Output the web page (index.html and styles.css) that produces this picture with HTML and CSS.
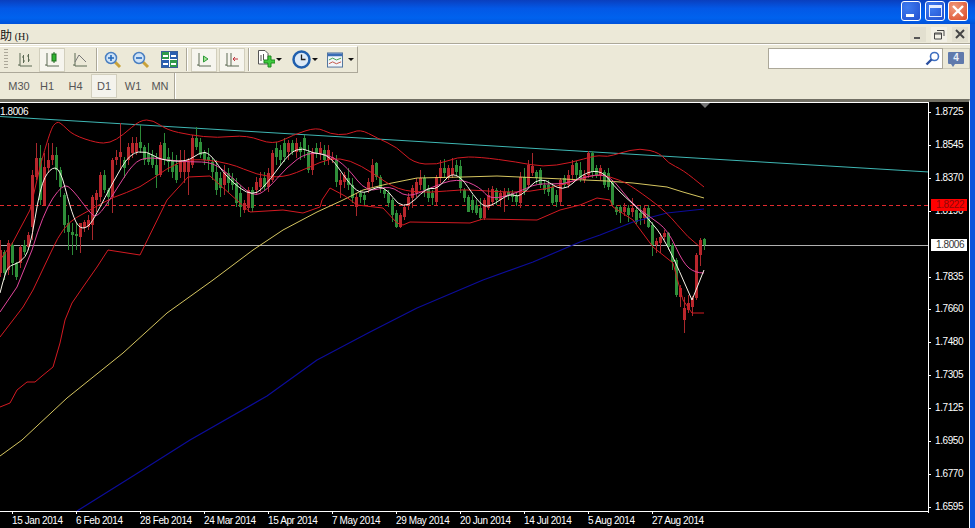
FILE: index.html
```html
<!DOCTYPE html>
<html lang="zh">
<head>
<meta charset="utf-8">
<title>Chart</title>
<link rel="stylesheet" href="styles.css">
</head>
<body>
<div class="window">
  <header class="titlebar">
    <button class="cap cap-min" aria-label="min"><span class="cap-min-bar"></span></button>
    <button class="cap cap-max" aria-label="max"><span class="cap-max-box"></span></button>
    <button class="cap cap-close" aria-label="close">
      <svg width="14" height="14" viewBox="0 0 14 14"><path d="M2 2L12 12M12 2L2 12" stroke="#fff" stroke-width="2.4" fill="none"/></svg>
    </button>
  </header>
  <div class="content">
    <nav class="menubar">
      <span class="menu-item">助 <small>(H)</small></span>
      <div class="mdi">
        <svg class="mdi-btn" width="16" height="15" viewBox="0 0 16 15"><path d="M4 11H10" stroke="#555" stroke-width="2"/></svg>
        <svg class="mdi-btn mdi-hi" width="16" height="15" viewBox="0 0 16 15"><path d="M6 3.500H13V9M3.500 6H10.500V12H3.500Z M3.500 7H10" stroke="#444" fill="none"/></svg>
        <svg class="mdi-btn" width="16" height="15" viewBox="0 0 16 15"><path d="M4 3L12 11M12 3L4 11" stroke="#444" stroke-width="2" fill="none"/></svg>
      </div>
    </nav>
    <div class="toolrow">
      <div class="toolbar">
        <span class="grip"></span>
        <span class="tb tb-first"><svg width="16" height="16" viewBox="0 0 16 16"><path d="M3 1V14H15M1 13H3M6.500 3V11M6.500 5H5M6.500 9H8M11.500 2V10M11.500 4H10M11.500 8H13" stroke="#5d6b55" fill="none"/></svg></span>
        <span class="tb tb-on tb-a"><svg width="16" height="16" viewBox="0 0 16 16"><path d="M3 1V14H15M1 13H3" stroke="#5d6b55" fill="none"/><path d="M10 0V11" stroke="#1c6a1c"/><rect x="8" y="2" width="4" height="7" fill="#2fb52f" stroke="#1c6a1c"/></svg></span>
        <span class="tb tb-line"><svg width="16" height="16" viewBox="0 0 16 16"><path d="M3 1V14H15M1 13H3" stroke="#5d6b55" fill="none"/><path d="M3 10L7 3L14 10" stroke="#777" fill="none"/></svg></span>
        <span class="sep sep-a"></span>
        <span class="tb tb-zoom"><svg width="18" height="18" viewBox="0 0 18 18"><path d="M11 11L16 16" stroke="#c9a23a" stroke-width="3"/><circle cx="7" cy="7" r="5.500" fill="#cfe3f7" stroke="#4a7fc0" stroke-width="1.500"/><path d="M4 7H10M7 4V10" stroke="#2468b8" stroke-width="1.600"/></svg></span>
        <span class="tb tb-zoom"><svg width="18" height="18" viewBox="0 0 18 18"><path d="M11 11L16 16" stroke="#c9a23a" stroke-width="3"/><circle cx="7" cy="7" r="5.500" fill="#cfe3f7" stroke="#4a7fc0" stroke-width="1.500"/><path d="M4 7H10" stroke="#2468b8" stroke-width="1.600"/></svg></span>
        <span class="tb tb-zoom"><svg width="17" height="17" viewBox="0 0 17 17"><rect x=".5" y=".5" width="16" height="16" fill="#fff" stroke="#3a5f9a"/><rect x="1" y="1" width="7" height="7" fill="#2f9a4a"/><rect x="9" y="1" width="7" height="7" fill="#2a5fb0"/><rect x="1" y="9" width="7" height="7" fill="#2a5fb0"/><rect x="9" y="9" width="7" height="7" fill="#2f9a4a"/><path d="M2 5H7M10 5H15M2 13H7M10 13H15" stroke="#fff" stroke-width="2"/></svg></span>
        <span class="sep sep-b"></span>
        <span class="tb tb-on tb-b"><svg width="16" height="16" viewBox="0 0 16 16"><path d="M3 1V14H15M1 13H3" stroke="#5d6b55" fill="none"/><path d="M7.500 4V10L12 7Z" fill="#9fe08f" stroke="#2f9a3a"/></svg></span>
        <span class="tb tb-on tb-c"><svg width="16" height="16" viewBox="0 0 16 16"><path d="M3 1V14H15M1 13H3M7 1V14" stroke="#5d6b55" fill="none"/><path d="M9 7H14M11 5L9 7L11 9" stroke="#c0303a" fill="none"/></svg></span>
        <span class="sep sep-c"></span>
        <span class="tb tb-drop"><svg width="18" height="19" viewBox="0 0 18 19"><path d="M1.500 .5H8L11 3.500V14H1.500Z" fill="#fff" stroke="#555"/><path d="M4 5V11M6.500 4V10" stroke="#555"/><path d="M11 6V10H7V13H11V17H14V13H18V10H14V6Z" fill="#3ecb3e" stroke="#1f8a1f"/></svg><i class="caret"></i></span>
        <span class="tb tb-drop"><svg width="19" height="19" viewBox="0 0 19 19"><circle cx="9.500" cy="9.500" r="8" fill="#dbe9f7" stroke="#1f5fae" stroke-width="2.500"/><path d="M9.500 4.500V9.500H13.500" stroke="#222" stroke-width="1.300" fill="none"/></svg><i class="caret"></i></span>
        <span class="tb tb-drop tb-ind"><svg width="17" height="16" viewBox="0 0 17 16"><rect x=".5" y=".5" width="16" height="15" fill="#f1f5f9" stroke="#4a6f9a"/><rect x="1" y="1" width="15" height="3" fill="#3a6cb5"/><path d="M2 8L6 6L10 8L15 6" stroke="#3aa04a" fill="none"/><path d="M2 12L6 10L10 12L15 10" stroke="#c05040" fill="none"/></svg><i class="caret"></i></span>
      </div>
      <div class="searchwrap">
        <div class="search">
          <svg width="15" height="15" viewBox="0 0 15 15"><circle cx="9.500" cy="5.500" r="4" fill="#fff" stroke="#3f6fc0" stroke-width="1.600"/><path d="M6.500 8.500L1.500 13.500" stroke="#2a4f9f" stroke-width="2.400"/></svg>
        </div>
        <div class="bubble-btn"><span class="bubble">4</span></div>
      </div>
    </div>
    <div class="tfrow">
      <div class="tfs">
        <span class="tf tf-m30">M30</span>
        <span class="tf tf-h1">H1</span>
        <span class="tf tf-h4">H4</span>
        <span class="tf tf-d1">D1</span>
        <span class="tf tf-w1">W1</span>
        <span class="tf tf-mn">MN</span>
      </div>
    </div>
    <main class="chart">
      <div class="chart-main">
        <div class="plot">
          <span class="cur-left">1.8006</span>
          <span class="marker"></span>
          <svg class="plot-svg" width="929" height="408" viewBox="0 103 929 408">
            <path d="M0 116.500L929 172" class="l-cyan"/>
            <path d="M0 245.500H929" class="l-grey"/>
            <path d="M0 205.500H929" class="l-dash"/>
            <g class="candles" transform="translate(.5 0)">
              <path class="wick-r" d="M0 240V277M8 240V275M20 245V268M28 232V250M32 170V240M36 143V180M44 153V205M48 143V173M52 143V165M80 223V253M84 220V232M88 215V230M92 195V240M96 190V212M100 172V202M112 158V213M116 150V165M120 123V170M128 143V165M132 137V158M136 137V155M160 142V177M180 150V178M184 150V183M188 158V195M192 135V168M224 165V195M244 200V213M248 187V212M256 177V195M260 172V192M268 168V192M272 150V182M288 140V160M296 138V158M312 148V175M320 142V160M328 145V165M332 152V163M340 173V198M344 172V188M356 193V216M368 178V193M372 159V187M400 213V228M404 204V220M408 193V210M412 185V208M416 178V197M420 170V190M436 175V205M440 160V183M448 165V180M452 158V178M484 198V220M488 188V210M492 186V206M500 190V207M504 188V212M520 172V208M528 160V188M532 153V176M560 178V205M568 170V188M572 160V180M584 170V183M588 151V178M600 165V180M624 203V216M632 198V217M644 205V224M656 238V253M660 233V253M664 230V240M680 285V307M684 297V333M688 295V313M692 296V316M696 253V300M700 238V266"/>
              <path class="wick-g" d="M4 250V280M12 242V275M16 262V280M24 240V255M40 145V205M56 147V180M60 167V197M64 193V233M68 215V250M72 223V255M76 223V250M104 170V193M108 188V205M124 157V178M140 125V153M144 145V165M148 143V165M152 150V168M156 153V188M164 133V165M168 148V172M172 152V178M176 155V183M196 127V150M200 138V158M204 150V165M208 148V170M212 158V180M216 160V195M220 172V197M228 168V192M232 173V190M236 178V207M240 185V217M252 187V212M264 172V190M276 142V165M280 145V165M284 138V162M292 140V155M300 142V160M304 135V158M308 145V173M316 143V158M324 145V165M336 155V187M348 168V190M352 178V203M360 190V203M364 192V205M376 162V180M380 175V193M384 187V198M388 190V207M392 198V222M396 210V228M424 175V197M428 185V202M432 190V205M444 159V178M456 160V176M460 160V193M464 188V202M468 195V212M472 195V213M476 200V215M480 198V220M496 188V205M508 188V200M512 190V202M516 192V206M524 168V195M536 170V184M540 168V188M544 180V194M548 180V196M552 183V205M556 190V207M564 175V188M576 161V180M580 162V182M592 151V178M596 165V178M604 170V188M608 168V190M612 180V207M616 205V215M620 205V223M628 205V222M636 207V224M640 206V225M648 205V228M652 222V256M668 232V250M672 243V270M676 258V297M704 238V250"/>
              <path class="body-r" d="M0 250V273M8 243V270M20 247V263M28 235V247M32 175V227M36 158V177M44 167V205M48 160V168M52 155V160M80 223V237M84 222V228M88 220V227M92 197V225M96 193V200M100 175V197M112 160V197M116 157V160M120 152V157M128 147V160M132 143V153M136 143V152M160 145V175M180 160V172M184 162V172M188 162V172M192 138V165M224 172V185M244 203V210M248 190V208M256 182V190M260 178V187M268 173V187M272 153V180M288 143V152M296 143V152M312 152V170M320 148V153M328 150V160M332 157V160M340 180V185M344 175V182M356 197V207M368 182V190M372 165V182M400 215V227M404 207V217M408 197V205M412 188V198M416 182V193M420 178V185M436 177V202M440 168V178M448 168V177M452 168V175M484 200V218M488 195V208M492 189V202M500 193V200M504 192V197M520 177V203M528 165V185M532 166V173M560 180V202M568 175V185M572 165V175M584 175V180M588 153V175M600 168V175M624 207V212M632 208V212M644 208V218M656 241V245M660 237V243M664 233V237M680 288V297M684 308V320M688 303V310M692 298V307M696 255V298M700 240V255"/>
              <path class="body-g" d="M4 252V273M12 245V263M16 263V277M24 245V252M40 158V200M56 155V170M60 170V187M64 195V225M68 223V232M72 232V235M76 234V236M104 175V190M108 190V197M124 160V168M140 142V148M144 147V160M148 153V162M152 155V165M156 165V175M164 143V160M168 157V162M172 160V172M176 165V180M196 138V147M200 142V155M204 152V160M208 157V160M212 162V172M216 172V190M220 178V188M228 173V183M232 178V185M236 183V203M240 193V207M252 190V208M264 178V187M276 148V157M280 150V160M284 143V157M292 143V152M300 147V152M304 138V150M308 152V170M316 148V153M324 150V160M336 160V182M348 178V185M352 185V198M360 193V197M364 195V200M376 163V177M380 177V188M384 190V194M388 193V203M392 200V215M396 213V227M424 178V190M428 188V198M432 193V198M444 168V173M456 165V172M460 166V188M464 190V198M468 197V212M472 200V210M476 205V213M480 208V218M496 190V200M508 192V195M512 193V197M516 195V202M524 177V192M536 172V178M540 170V185M544 185V190M548 185V192M552 187V203M556 195V202M564 178V185M576 163V175M580 170V178M592 153V172M596 168V175M604 172V185M608 173V187M612 182V205M616 207V212M620 207V213M628 208V215M636 210V222M640 213V218M648 208V227M652 225V245M668 233V247M672 245V262M676 260V295M704 239V245"/>
            </g>
            <polyline class="l-blue" points="77,511 133,476 190,440 267,396 317,360 370,332 417,308 483,280 533,262 580,242 600,235 633,222 667,213 704,209"/>
            <polyline class="l-yellow" points="0,456 22,440 67,398 123,353 167,313 213,280 253,250 283,230 317,212 343,200 363,190 387,184 417,178 463,177 497,176 563,179 607,181 633,183 667,187 683,192 704,198"/>
            <path class="l-red" d="M0 260L13 242L30 210L40 167Q50 130 53.500 125.500Q57 121 60 123Q63 125 68 130Q73 135 85 139Q97 143 103.500 143Q110 143 116.500 139Q123 135 131.500 127.500Q140 120 146.500 120Q153 120 160 125Q167 130 178.500 132.500Q190 135 203.500 136.500Q217 138 232 136.500Q247 135 260 140Q273 145 283 140Q293 135 305 131Q317 127 323.500 130.500Q330 134 338.500 134.500Q347 135 353.500 132Q360 129 368.500 133.500Q377 138 387 142.500Q397 147 405 155Q413 163 425 164Q437 165 447 161Q457 157 468.500 157Q480 157 498.500 159.500Q517 162 530 164.500Q543 167 556.500 165Q570 163 583.500 159Q597 155 602 156Q607 157 613.500 155Q620 153 630 150.500Q640 148 650 150.500Q660 153 664 158Q668 163 675.500 166.500Q683 170 693.500 178.500L704 187"/>
            <path class="l-red" d="M0 337L23 307L33 290L52 250Q63 225 76.500 217.500Q90 210 101.500 203.500Q113 197 126.500 192.500Q140 188 153.500 178Q167 168 178.500 163Q190 158 210 160.500Q230 163 243.500 169Q257 175 270 176.500Q283 178 296.500 172.500Q310 167 320 162.500Q330 158 340 159Q350 160 361.500 166.500Q373 173 385 181.500Q397 190 413.500 191.500Q430 193 446.500 191Q463 189 480 190.500Q497 192 513.500 192Q530 192 546.500 188.500Q563 185 580 179Q597 173 608.500 176.500Q620 180 626.500 183.500Q633 187 650 199.500Q667 212 677 224.500Q687 237 700 247"/>
            <polyline class="l-red" points="0,407 10,403 17,390 27,382 35,382 42,376 53,367 60,343 65,320 72,303 83,287 97,267 108,250 140,255 167,200 188,177 210,176 250,212 283,210 303,213 320,207 322,200 330,188 345,196 357,205 383,208 397,223 403,225 410,222 470,223 483,219 537,220 560,210 580,205 597,198 610,200 613,207 633,220 653,247 673,263 683,300 692,313 704,313"/>
            <path class="l-pink" d="M0 312L17 287L32 250Q43 213 53 198Q63 183 68 186.500Q73 190 81.500 201.500Q90 213 93.500 215.500Q97 218 105 206.500Q113 195 123 179Q133 163 140 160Q147 157 157 158.500Q167 160 178.500 161Q190 162 201.500 162Q213 162 223 170Q233 178 243 187.500Q253 197 260 193.500Q267 190 277 178.500Q287 167 297 159.500Q307 152 318.500 153.500Q330 155 338.500 161Q347 167 357 180Q367 193 378.500 189Q390 185 398.500 191.500Q407 198 418.500 193Q430 188 443.500 183Q457 178 468.500 182.500Q480 187 485 193.500Q490 200 503.500 196.500Q517 193 527 188Q537 183 550 184Q563 185 576.500 180Q590 175 600 175Q610 175 620 188.500Q630 202 640 209.500Q650 217 659 223.500Q668 230 675.500 246.500Q683 263 689 268Q695 273 704 273"/>
            <path class="l-white" d="M0 293Q5 273 7.500 269Q10 265 15 264Q20 263 25 256.500Q30 250 35 218.500Q40 187 45 177.500Q50 168 55 168Q60 168 65 187.500Q70 207 74 217.500Q78 228 83 228Q88 228 92.500 220.500Q97 213 105 197.500Q113 182 121.500 167.500Q130 153 138.500 152Q147 151 153.500 155.500Q160 160 173.500 161Q187 162 193.500 157Q200 152 205 152.500Q210 153 218.500 165.500Q227 178 240 188Q253 198 261.500 189Q270 180 280 166Q290 152 296.500 150Q303 148 307.500 150.500Q312 153 321 154Q330 155 340 170Q350 185 356.500 190Q363 195 373 189Q383 183 393 197.500Q403 212 415 199.500Q427 187 432 188.500Q437 190 446 179Q455 168 467.500 186.500Q480 205 485 206Q490 207 500 200Q510 193 515 195.500Q520 198 530 186.500Q540 175 551.500 184Q563 193 573 183Q583 173 592.500 171.500Q602 170 609.500 180Q617 190 632.500 203.500Q648 217 657.500 230Q667 243 679.500 271.500L692 300L704 270"/>
          </svg>
        </div>
        <div class="time-axis">
          <span class="tick">15 Jan 2014</span>
          <span class="tick">6 Feb 2014</span>
          <span class="tick">28 Feb 2014</span>
          <span class="tick">24 Mar 2014</span>
          <span class="tick">15 Apr 2014</span>
          <span class="tick">7 May 2014</span>
          <span class="tick">29 May 2014</span>
          <span class="tick">20 Jun 2014</span>
          <span class="tick">14 Jul 2014</span>
          <span class="tick">5 Aug 2014</span>
          <span class="tick">27 Aug 2014</span>
        </div>
      </div>
      <div class="price-axis">
        <span class="price">1.8725</span>
        <span class="price">1.8545</span>
        <span class="price">1.8370</span>
        <span class="price price-under">1.8190</span>
        <span class="price price-blank"></span>
        <span class="price">1.7835</span>
        <span class="price">1.7660</span>
        <span class="price">1.7480</span>
        <span class="price">1.7305</span>
        <span class="price">1.7125</span>
        <span class="price">1.6950</span>
        <span class="price">1.6770</span>
        <span class="price">1.6595</span>
        <span class="tag tag-red">1.8222</span>
        <span class="tag tag-white">1.8006</span>
      </div>
    </main>
  </div>
</div>
</body>
</html>
```

FILE: styles.css
```css
* { box-sizing: border-box; }
html, body { margin: 0; padding: 0; background: #0054e3; overflow: hidden; }
.window { width: 975px; height: 528px; display: flex; flex-direction: column; overflow: hidden; font-family: "Liberation Sans", sans-serif; background: #0a55dc; }

.titlebar { height: 24px; flex: none; display: flex; justify-content: flex-end; align-items: flex-start; gap: 3px; padding: 1px 7px 0 0; background: linear-gradient(#0a3fbe, #0358e6 35%, #0062ee 75%, #0052da); }
.cap { width: 20px; height: 20px; padding: 0; border: 1px solid #fff; border-radius: 3px; display: flex; align-items: center; justify-content: center; background: radial-gradient(circle at 30% 30%, #3f7cf0, #2350cf); }
.cap-min { margin-right: 1px; }
.cap-min-bar { width: 8px; height: 3px; background: #fff; margin-top: 8px; margin-right: 3px; }
.cap-max-box { width: 13px; height: 12px; border: 1px solid #e4ecff; border-top-width: 3px; }
.cap-close { background: radial-gradient(circle at 30% 30%, #f09a7c, #db4a25); }

.content { width: 970px; flex: 1; min-height: 0; display: flex; flex-direction: column; background: #ece9d8; }
.menubar { height: 21px; flex: none; display: flex; justify-content: space-between; align-items: center; border-bottom: 1px solid #fff; box-shadow: inset 0 -1px 0 #aca899; padding-right: 2px; }
.menu-item { font: 12px "Noto Sans CJK SC", "Liberation Sans", sans-serif; color: #111; }
.menu-item small { font: 10px "Liberation Serif", serif; }
.mdi { display: flex; gap: 4px; align-items: center; }
.mdi-btn { display: block; background: #e2dfcf; }
.mdi-hi { background: #f2f0e6; margin: 0 1px; }

.toolrow { height: 28px; flex: none; display: flex; justify-content: space-between; align-items: flex-start; padding-top: 1px; }
.toolbar { width: 358px; height: 27px; display: flex; align-items: center; border: 1px solid #fff; border-left: 0; border-right-color: #aca899; border-bottom-color: #aca899; }
.grip { width: 4px; height: 21px; margin-left: 4px; background: repeating-linear-gradient(#aca899 0 1px, #ece9d8 1px 3px); flex: none; }
.tb { height: 24px; display: flex; align-items: center; justify-content: center; flex: none; }
.tb-first { width: 25px; margin-left: 4px; }
.tb-on { width: 26px; background: #f6f5ee; border: 1px solid #d2cfbd; }
.tb-a { margin-left: 2px; }
.tb-line { width: 22px; margin-left: 4px; }
.sep { width: 1px; height: 23px; background: #aca899; box-shadow: 1px 0 0 #fff; flex: none; }
.sep-a { margin: 0 2px 0 5px; }
.tb-zoom { width: 28px; }
.sep-b { margin: 0 4px 0 3px; }
.tb-c { margin-left: 2px; }
.sep-c { margin: 0 5px 0 3px; }
.tb-drop { width: 35px; gap: 1px; padding-left: 3px; justify-content: flex-start; }
.tb-ind { width: 30px; gap: 2px; }
.tb-ind .caret { margin-left: 3px; }
.caret { width: 0; height: 0; border: 3px solid transparent; border-top: 3px solid #111; border-bottom: 0; display: block; }

.searchwrap { display: flex; height: 21px; margin-top: 2px; }
.search { width: 175px; height: 21px; background: #fff; border: 1px solid #aca899; display: flex; justify-content: flex-end; align-items: center; padding-right: 2px; }
.bubble-btn { width: 27px; height: 21px; border: 1px solid #ccc9b8; border-left: 0; display: flex; align-items: center; justify-content: center; }
.bubble { width: 16px; height: 12px; background: #5f79ac; color: #e9eef7; font: bold 10px/12px "Liberation Sans", sans-serif; text-align: center; border-radius: 1px; position: relative; margin-top: -2px; }
.bubble::after { content: ""; position: absolute; left: 3px; top: 12px; border: 2px solid transparent; border-top: 3px solid #5f79ac; border-bottom: 0; }

.tfrow { height: 26px; flex: none; }
.tfs { width: 175px; height: 26px; display: flex; align-items: center; border-right: 1px solid #aca899; box-shadow: 1px 0 0 #fff; font-size: 11px; color: #555; }
.tf { display: flex; align-items: center; justify-content: center; height: 24px; flex: none; }
.tf-m30 { width: 20px; margin-left: 9px; }
.tf-h1 { width: 14px; margin-left: 11px; }
.tf-h4 { width: 15px; margin-left: 14px; }
.tf-d1 { width: 26px; margin-left: 8px; background: #f4f3ec; border: 1px solid #d2cfbd; }
.tf-w1 { width: 16px; margin-left: 8px; }
.tf-mn { width: 16px; margin-left: 11px; }

.chart { flex: 1; min-height: 0; display: flex; background: #000; border-top: 3px solid #716f64; border-right: 1px solid #fff; color: #fff; font-size: 10px; letter-spacing: -.4px; }
.chart-main { width: 929px; flex: none; display: flex; flex-direction: column; }
.plot { height: 410px; flex: none; position: relative; border-top: 1px solid #fff; border-bottom: 1px solid #fff; overflow: hidden; }
.plot-svg { display: block; filter: blur(.3px); }
.plot-svg path, .plot-svg polyline { fill: none; stroke-linejoin: round; }
.l-cyan { stroke: #3fb7b4; }
.l-grey { stroke: #b0b0b0; }
.l-dash { stroke: #e02a2e; stroke-dasharray: 4 3; }
.l-blue { stroke: #0c0c9a; stroke-width: 1.200; }
.l-yellow { stroke: #eedc6c; stroke-width: .9; }
.l-red { stroke: #d31a22; }
.l-pink { stroke: #e2459c; }
.l-white { stroke: #f8f4e8; }
.candles { shape-rendering: crispEdges; }
.wick-r { stroke: #a8282c; }
.wick-g { stroke: #2c8a38; }
.body-r { stroke: #b8262c; stroke-width: 3; }
.body-g { stroke: #2f8f3a; stroke-width: 3; }
.cur-left { position: absolute; left: 0; top: 3px; z-index: 1; }
.marker { position: absolute; left: 700px; top: 0; width: 0; height: 0; border: 5px solid transparent; border-top: 5px solid #777; border-bottom: 0; z-index: 1; }

.time-axis { flex: 1; display: flex; padding-left: 12px; }
.tick { width: 64px; flex: none; position: relative; padding-top: 3px; white-space: nowrap; line-height: 12px; }
.tick::before { content: ""; position: absolute; left: 0; top: 0; width: 1px; height: 2px; background: #fff; }

.price-axis { flex: 1; height: 411px; display: flex; flex-direction: column; justify-content: space-between; border-left: 1px solid #fff; margin-left: -1px; padding: 4px 0 0; position: relative; }
.price { padding-left: 6px; height: 12px; line-height: 12px; position: relative; }
.price::before { content: ""; position: absolute; left: 0; top: 6px; width: 2px; height: 1px; background: #fff; }
.price-blank::before { display: none; }
.tag { position: absolute; left: 2px; width: 36px; height: 12px; line-height: 12px; padding-left: 5px; }
.tag-red { top: 97px; background: #f00; color: #8c0a0a; }
.tag-white { top: 137px; background: #fff; color: #333; }
```
